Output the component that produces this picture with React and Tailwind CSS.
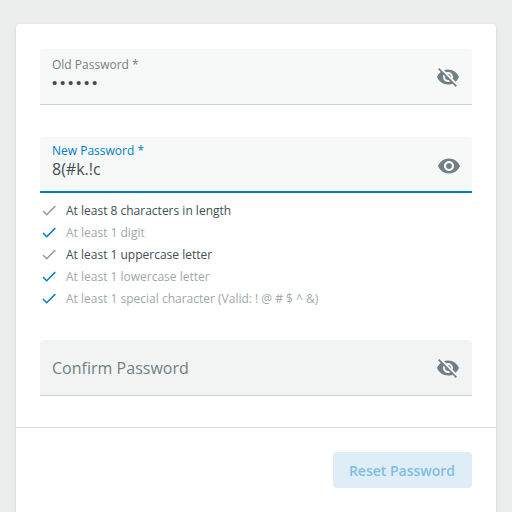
const VISIBLE =
  "M12 4.5C7 4.5 2.73 7.61 1 12c1.73 4.39 6 7.5 11 7.5s9.27-3.11 11-7.5c-1.73-4.39-6-7.5-11-7.5zM12 17c-2.76 0-5-2.24-5-5s2.24-5 5-5 5 2.24 5 5-2.24 5-5 5zm0-8c-1.66 0-3 1.34-3 3s1.34 3 3 3 3-1.34 3-3-1.34-3-3-3z";
const HIDDEN =
  "M12 7c2.76 0 5 2.24 5 5 0 .65-.13 1.26-.36 1.83l2.92 2.92c1.51-1.26 2.7-2.89 3.43-4.75-1.73-4.39-6-7.5-11-7.5-1.4 0-2.74.25-3.98.7l2.16 2.16C10.74 7.13 11.35 7 12 7zM2 4.27l2.28 2.28.46.46C3.08 8.3 1.78 10.02 1 12c1.73 4.39 6 7.5 11 7.5 1.55 0 3.03-.3 4.38-.84l.42.42L19.73 22 21 20.73 3.27 3 2 4.27zM7.53 9.8l1.55 1.55c-.05.21-.08.43-.08.65 0 1.66 1.34 3 3 3 .22 0 .44-.03.65-.08l1.55 1.55c-.67.33-1.41.53-2.2.53-2.76 0-5-2.24-5-5 0-.79.2-1.53.53-2.2zm4.31-.78l3.15 3.15.02-.16c0-1.66-1.34-3-3-3l-.17.01z";

function Eye({ open, className = "" }) {
  return (
    <button type="button" className={`shrink-0 text-[#727f85] ${className}`} aria-label="Toggle visibility">
      <svg viewBox="0 0 24 24" className="block size-6" fill="currentColor">
        <path d={open ? VISIBLE : HIDDEN} />
      </svg>
    </button>
  );
}

const rules = [
  { text: "At least 8 characters in length", met: false },
  { text: "At least 1 digit", met: true },
  { text: "At least 1 uppercase letter", met: false },
  { text: "At least 1 lowercase letter", met: true },
  { text: "At least 1 special character (Valid: ! @ # $ ^ &)", met: true },
];

export default function App() {
  return (
    <div className="h-[512px] overflow-hidden bg-[#eceeee] px-4 pt-6 font-['Open_Sans','Noto_Sans',sans-serif]">
      <div className="h-[560px] rounded-[4px] bg-white shadow-[0_1px_3px_rgba(66,78,84,0.22)]">
        <div className="h-[404px] border-b border-[#dadddd] px-6 pt-[25px]">
          <div className="flex h-14 justify-between rounded-t-[4px] border-b border-[#cbd2d3] bg-[#f7f9f8] px-3">
            <div className="pt-[7px]">
              <div className="text-[12px] leading-[18px] text-[#727f85]">Old Password *</div>
              <div className="font-['Liberation_Sans',sans-serif] text-[15px] leading-[18px] tracking-[2.75px] text-[#424e54]">••••••</div>
            </div>
            <Eye className="self-center" />
          </div>
          <div className="mt-8 flex h-14 justify-between rounded-t-[4px] border-b-2 border-[#007dc6] bg-[#f7f9f8] pr-[11px] pl-3">
            <div className="pt-[5px]">
              <div className="text-[12px] leading-[18px] text-[#007dc6]">New Password *</div>
              <div className="text-[16px] leading-[18px] text-[#424e54]">8(#k.!c</div>
            </div>
            <Eye open className="mt-[3px] self-center" />
          </div>
          <ul className="mt-[7px]">
            {rules.map((r) => (
              <li key={r.text} className="flex h-[22px] items-center gap-2">
                <svg
                  viewBox="0 0 18 18"
                  className={`size-[18px] shrink-0 ${r.met ? "text-[#007dc6]" : "text-[#929b9e]"}`}
                  fill="none"
                  stroke="currentColor"
                  strokeWidth="1.5"
                >
                  <path d="M3 9 L6.7 12.7 L15.3 4.1" />
                </svg>
                <span className={`text-[12px] leading-[18px] ${r.met ? "text-[#a0a8ab]" : "text-[#424e54]"}`}>{r.text}</span>
              </li>
            ))}
          </ul>
          <div className="mt-[30px] flex h-14 items-center justify-between rounded-t-[4px] border-b border-[#cbd2d3] bg-[#f2f4f4] px-3">
            <span className="text-[16px] leading-6 tracking-[0.02px] text-[#727f85]">Confirm Password</span>
            <Eye />
          </div>
        </div>
        <div className="flex justify-end px-6 pt-6">
          <button type="button" className="h-9 w-[139px] rounded-[4px] bg-[#dfedf7] pr-px text-[14px] font-semibold text-[#80bee2]">
            Reset Password
          </button>
        </div>
      </div>
    </div>
  );
}
